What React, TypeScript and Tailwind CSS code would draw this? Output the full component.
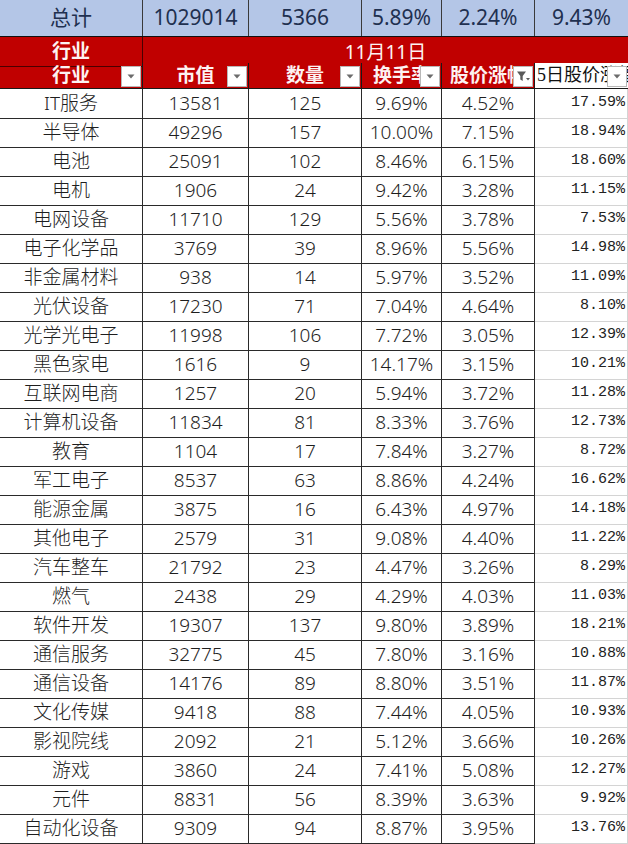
import React from "react";

type Row = [string, number, number, string, string, string];

const ROWS: Row[] = [
  ["IT服务", 13581, 125, "9.69%", "4.52%", "17.59%"],
  ["半导体", 49296, 157, "10.00%", "7.15%", "18.94%"],
  ["电池", 25091, 102, "8.46%", "6.15%", "18.60%"],
  ["电机", 1906, 24, "9.42%", "3.28%", "11.15%"],
  ["电网设备", 11710, 129, "5.56%", "3.78%", "7.53%"],
  ["电子化学品", 3769, 39, "8.96%", "5.56%", "14.98%"],
  ["非金属材料", 938, 14, "5.97%", "3.52%", "11.09%"],
  ["光伏设备", 17230, 71, "7.04%", "4.64%", "8.10%"],
  ["光学光电子", 11998, 106, "7.72%", "3.05%", "12.39%"],
  ["黑色家电", 1616, 9, "14.17%", "3.15%", "10.21%"],
  ["互联网电商", 1257, 20, "5.94%", "3.72%", "11.28%"],
  ["计算机设备", 11834, 81, "8.33%", "3.76%", "12.73%"],
  ["教育", 1104, 17, "7.84%", "3.27%", "8.72%"],
  ["军工电子", 8537, 63, "8.86%", "4.24%", "16.62%"],
  ["能源金属", 3875, 16, "6.43%", "4.97%", "14.18%"],
  ["其他电子", 2579, 31, "9.08%", "4.40%", "11.22%"],
  ["汽车整车", 21792, 23, "4.47%", "3.26%", "8.29%"],
  ["燃气", 2438, 29, "4.29%", "4.03%", "11.03%"],
  ["软件开发", 19307, 137, "9.80%", "3.89%", "18.21%"],
  ["通信服务", 32775, 45, "7.80%", "3.16%", "10.88%"],
  ["通信设备", 14176, 89, "8.80%", "3.51%", "11.87%"],
  ["文化传媒", 9418, 88, "7.44%", "4.05%", "10.93%"],
  ["影视院线", 2092, 21, "5.12%", "3.66%", "10.26%"],
  ["游戏", 3860, 24, "7.41%", "5.08%", "12.27%"],
  ["元件", 8831, 56, "8.39%", "3.63%", "9.92%"],
  ["自动化设备", 9309, 94, "8.87%", "3.95%", "13.76%"],
];

const GRID = "grid grid-cols-[143px_106px_113px_80px_93px_93px]";

function DropBtn({ funnel = false }: { funnel?: boolean }) {
  return (
    <span className="absolute right-[1px] top-[3px] flex h-[21px] w-[20px] items-center justify-center border border-[#b8b8b8] bg-white">
      {funnel ? (
        <svg width="15" height="13" viewBox="0 0 15 13">
          <path d="M1 1.5h9L6.7 6v5L4.3 9.5V6z" fill="#5a5a5a" />
          <path d="M10 8l2 2.5 2-2.5z" fill="#5a5a5a" />
        </svg>
      ) : (
        <svg width="8" height="5" viewBox="0 0 8 5">
          <path d="M0.5 0.5h7L4 4.5z" fill="#6b6b6b" />
        </svg>
      )}
    </span>
  );
}

function HeadCell({ label, funnel, white, last }: { label: string; funnel?: boolean; white?: boolean; last?: boolean }) {
  return (
    <div
      className={`relative flex h-[26px] items-center overflow-hidden border-b border-[#1a1a1a] ${
        last ? "" : "border-r"
      } ${white ? "bg-white pl-[2px] text-[18px] font-normal text-[#111] [font-family:'Liberation_Serif','Noto_Sans_CJK_SC',serif]" : "justify-center text-[19px] font-bold text-[#fdf2f2]"}`}
    >
      <span className="whitespace-nowrap">{label}</span>
      <DropBtn funnel={funnel} />
    </div>
  );
}

export default function App() {
  return (
    <div className="h-[844px] w-[628px] overflow-hidden bg-white [font-family:'Noto_Sans','Noto_Sans_CJK_SC',sans-serif]">
      {/* totals */}
      <div className={`${GRID} h-[37px] border-b border-[#111] bg-[#b4c6e7] text-[21px] text-[#1f3050]`}>
        {["总计", "1029014", "5366", "5.89%", "2.24%", "9.43%"].map((v, i) => (
          <div key={i} className={`flex items-center justify-center ${i < 5 ? "border-r border-[#3a3a3a]" : ""}`}>
            {v}
          </div>
        ))}
      </div>

      {/* red header */}
      <div className="bg-[#c00000]">
        <div className={`${GRID} h-[26px]`}>
          <div className="flex items-center justify-center border-r border-b border-[#4a0000] text-[19px] font-bold text-[#fdf2f2]">
            行业
          </div>
          <div className="col-span-5 flex items-center justify-center text-[19px] text-[#fdf2f2]">11月11日</div>
        </div>
        <div className={GRID}>
          <HeadCell label="行业" />
          <HeadCell label="市值" />
          <HeadCell label="数量" />
          <HeadCell label="换手率" />
          <HeadCell label="股价涨幅" funnel />
          <HeadCell label="5日股价涨幅" white last />
        </div>
      </div>

      {/* data */}
      {ROWS.map((r) => (
        <div key={r[0]} className={`${GRID} h-[29px] text-[19px] font-light text-[#1e1e1e]`}>
          {r.slice(0, 5).map((v, i) => (
            <div key={i} className="flex items-center justify-center border-r border-b border-[#2a2a2a] whitespace-nowrap">
              {v}
            </div>
          ))}
          <div className="flex items-center justify-end border-b border-r border-[#d4d4d4] pr-[2px] text-[15px] text-[#222] [font-family:'Liberation_Mono',monospace]">
            {r[5]}
          </div>
        </div>
      ))}
    </div>
  );
}
